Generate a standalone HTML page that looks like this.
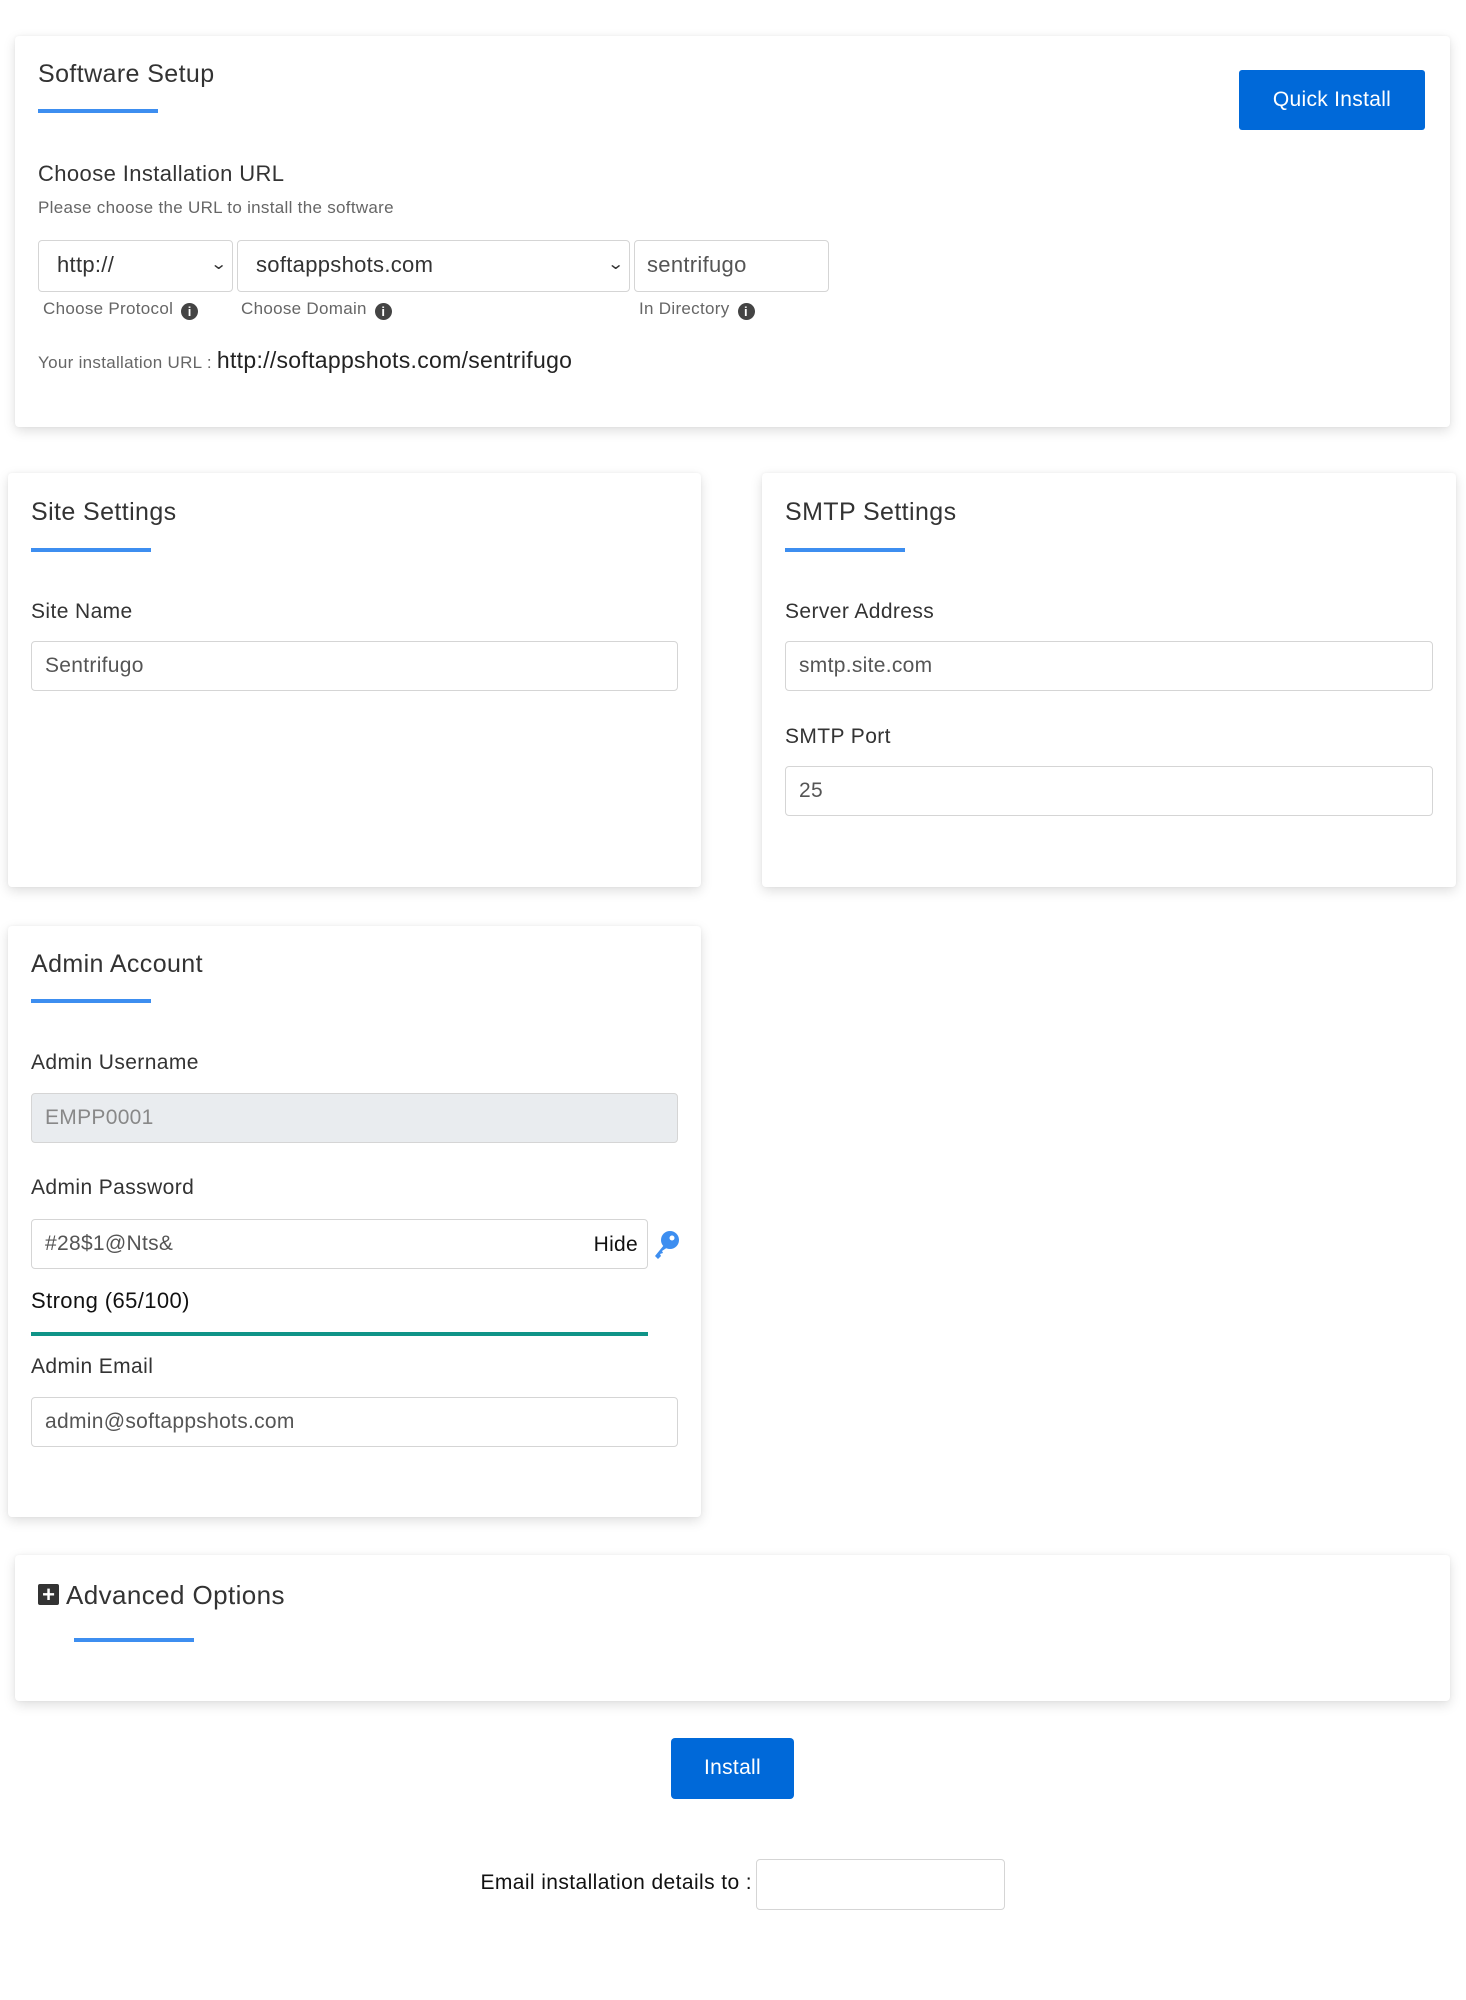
<!DOCTYPE html>
<html><head><meta charset="utf-8"><style>
body{margin:0;width:1466px;height:2000px;background:#fff;font-family:"Liberation Sans",sans-serif;position:relative;overflow:hidden;color:#222}
.a{position:absolute}
.card{position:absolute;background:#fff;border-radius:4px;box-shadow:0 4px 12px rgba(0,0,0,.13),0 0 3px rgba(0,0,0,.05)}
.t{position:absolute;font-size:25px;color:#333;letter-spacing:.4px}
.ul{position:absolute;height:4px;width:120px;background:#3d8ef0}
.lb{position:absolute;font-size:21px;color:#333;letter-spacing:.4px}
.in{position:absolute;height:50px;border:1px solid #d5d5d5;border-radius:4px;box-sizing:border-box;font-size:21px;color:#555;padding:12px 13px;line-height:24px;letter-spacing:.3px}
.sm{position:absolute;font-size:17px;color:#666;letter-spacing:.3px}
.info{display:inline-block;width:17px;height:17px;border-radius:50%;background:#444;color:#fff;font-size:13px;font-weight:bold;text-align:center;line-height:17px;vertical-align:-2px;margin-left:8px}
.btn{position:absolute;background:#0069d9;color:#fff;font-size:21px;text-align:center;border-radius:3px;letter-spacing:.3px}
.chev{position:absolute;right:6px;top:12px;font-size:16px;color:#333;transform:scaleX(1.3)}
</style></head><body>
<div class="card" style="left:15px;top:36px;width:1435px;height:391px"></div>
<div class="t" style="left:38px;top:60px">Software Setup</div>
<div class="ul" style="left:38px;top:109px"></div>
<div class="btn" style="left:1239px;top:70px;width:186px;height:60px;line-height:60px">Quick Install</div>
<div class="lb" style="left:38px;top:161px;font-size:22px">Choose Installation URL</div>
<div class="sm" style="left:38px;top:198px;color:#666">Please choose the URL to install the software</div>
<div class="in" style="left:38px;top:240px;width:195px;height:52px;color:#333;font-size:22px;padding-left:18px">http://<span class="chev">&#8964;</span></div>
<div class="in" style="left:237px;top:240px;width:393px;height:52px;color:#333;font-size:22px;padding-left:18px">softappshots.com<span class="chev">&#8964;</span></div>
<div class="in" style="left:634px;top:240px;width:195px;height:52px;font-size:22px;padding-left:12px">sentrifugo</div>
<div class="sm" style="left:43px;top:299px">Choose Protocol<span class="info">i</span></div>
<div class="sm" style="left:241px;top:299px">Choose Domain<span class="info">i</span></div>
<div class="sm" style="left:639px;top:299px">In Directory<span class="info">i</span></div>
<div class="sm" style="left:38px;top:347px">Your installation URL : <span style="font-size:23px;color:#222">http://softappshots.com/sentrifugo</span></div>

<div class="card" style="left:8px;top:473px;width:693px;height:414px"></div>
<div class="t" style="left:31px;top:498px">Site Settings</div>
<div class="ul" style="left:31px;top:548px"></div>
<div class="lb" style="left:31px;top:600px">Site Name</div>
<div class="in" style="left:31px;top:641px;width:647px">Sentrifugo</div>

<div class="card" style="left:762px;top:473px;width:694px;height:414px"></div>
<div class="t" style="left:785px;top:498px">SMTP Settings</div>
<div class="ul" style="left:785px;top:548px"></div>
<div class="lb" style="left:785px;top:600px">Server Address</div>
<div class="in" style="left:785px;top:641px;width:648px">smtp.site.com</div>
<div class="lb" style="left:785px;top:725px">SMTP Port</div>
<div class="in" style="left:785px;top:766px;width:648px">25</div>

<div class="card" style="left:8px;top:926px;width:693px;height:591px"></div>
<div class="t" style="left:31px;top:950px">Admin Account</div>
<div class="ul" style="left:31px;top:999px"></div>
<div class="lb" style="left:31px;top:1051px">Admin Username</div>
<div class="in" style="left:31px;top:1093px;width:647px;background:#e9ecef;color:#888">EMPP0001</div>
<div class="lb" style="left:31px;top:1176px">Admin Password</div>
<div class="in" style="left:31px;top:1219px;width:617px">#28$1@Nts&amp;<span style="position:absolute;right:9px;top:13px;color:#111">Hide</span></div>
<svg class="a" style="left:652px;top:1230px" width="28" height="30" viewBox="0 0 28 30"><circle cx="18" cy="10" r="9" fill="#3d8ef0"/><circle cx="20" cy="8" r="2.5" fill="#fff"/><path d="M12 15 L3 26 L6 29 L9 26 L8 24 L11 23 L10 21 L16 17Z" fill="#3d8ef0"/></svg>
<div class="lb" style="left:31px;top:1288px;color:#111;font-size:22px">Strong (65/100)</div>
<div class="a" style="left:31px;top:1332px;width:617px;height:4px;background:#0f9488"></div>
<div class="lb" style="left:31px;top:1355px">Admin Email</div>
<div class="in" style="left:31px;top:1397px;width:647px">admin@softappshots.com</div>

<div class="card" style="left:15px;top:1555px;width:1435px;height:146px"></div>
<div class="a" style="left:38px;top:1584px;width:21px;height:21px;background:#333;border-radius:2px;color:#fff;font-weight:bold;font-size:22px;line-height:21px;text-align:center">+</div>
<div class="t" style="left:66px;top:1580px;font-size:26px">Advanced Options</div>
<div class="ul" style="left:74px;top:1638px"></div>

<div class="btn" style="left:671px;top:1738px;width:123px;height:61px;line-height:60px;border-radius:4px">Install</div>
<div class="lb" style="right:714px;top:1871px;color:#111;white-space:nowrap">Email installation details to :</div>
<div class="in" style="left:756px;top:1859px;width:249px;height:51px"></div>
</body></html>
